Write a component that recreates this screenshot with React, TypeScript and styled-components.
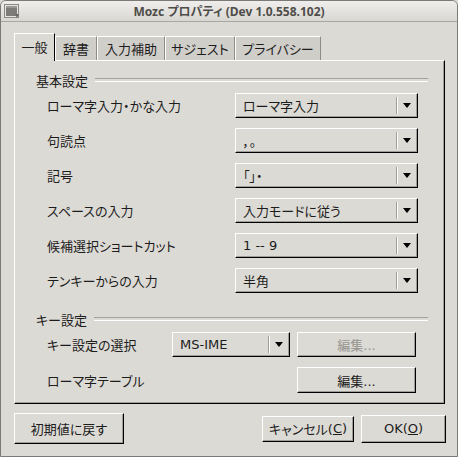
import React from "react";
import styled, { createGlobalStyle, css } from "styled-components";

const GlobalStyle = createGlobalStyle`
  html, body {
    margin: 0;
    padding: 0;
    background: #dcdad5;
  }
  body {
    font-family: "DejaVu Sans", "Noto Sans CJK JP", sans-serif;
    font-size: 13px;
    color: #1c1c1c;
    font-feature-settings: "palt";
  }
  * {
    box-sizing: border-box;
  }
`;

const raised = css`
  border: 1px solid;
  border-color: #ffffff #000000 #000000 #ffffff;
  box-shadow: inset -1px -1px 0 #a09e99;
  background: #dcdad5;
`;

const Window = styled.div`
  width: 458px;
  height: 457px;
  border: 1px solid #7b7a76;
  border-radius: 6px 6px 0 0;
  background: #dcdad5;
  overflow: hidden;
  display: flex;
  flex-direction: column;
`;

const TitleBar = styled.div`
  height: 21px;
  display: grid;
  grid-template-columns: 24px 1fr 24px;
  align-items: center;
  background: linear-gradient(#efeeec, #d9d7d2);
  border-bottom: 1px solid #a9a7a2;
`;

const TitleIcon = styled.div`
  display: flex;
  padding-left: 3px;
  padding-top: 1px;
`;

const TitleText = styled.div`
  text-align: center;
  font-family: "Noto Sans", "Noto Sans CJK JP", sans-serif;
  font-weight: bold;
  font-size: 12px;
  color: #4e4d4a;
`;

const Body = styled.div`
  padding: 11px 11px 0 13px;
  display: flex;
  flex-direction: column;
`;

const TabBar = styled.div`
  display: flex;
  align-items: flex-end;
  height: 27px;
`;

const Tab = styled.div<{ $active?: boolean; $w: number }>`
  position: relative;
  width: ${(p) => p.$w}px;
  height: ${(p) => (p.$active ? 28 : 24)}px;
  margin-bottom: ${(p) => (p.$active ? -1 : 0)}px;
  z-index: ${(p) => (p.$active ? 2 : 1)};
  display: flex;
  align-items: center;
  justify-content: center;
  padding-bottom: ${(p) => (p.$active ? 3 : 1)}px;
  border-top: 1px solid #ffffff;
  border-left: 1px solid #ffffff;
  border-right: 1px solid ${(p) => (p.$active ? "#000000" : "#8e8c87")};
  background: ${(p) => (p.$active ? "#dcdad5" : "#d0cec9")};
  font-family: "Noto Sans CJK JP", sans-serif;
  font-size: 13px;
  color: #1c1c1c;
`;

const Pane = styled.div`
  width: 431px;
  height: 344px;
  border: 1px solid;
  border-color: #ffffff #000000 #000000 #ffffff;
  box-shadow: inset -1px -1px 0 #a09e99;
  padding: 11px 16px 0 21px;
  display: flex;
  flex-direction: column;
`;

const Group = styled.div<{ $gap?: number }>`
  display: flex;
  flex-direction: column;
  width: 392px;
  margin-top: ${(p) => p.$gap ?? 0}px;
`;

const GroupTitle = styled.div`
  display: flex;
  align-items: center;
  gap: 7px;
  height: 16px;
  font-family: "Noto Sans CJK JP", sans-serif;
  font-size: 13px;
  margin-bottom: 5px;

  &::after {
    content: "";
    flex: 1;
    height: 2px;
    border-top: 1px solid #a3a19c;
    border-bottom: 1px solid #ffffff;
  }
`;

const Rows = styled.div`
  display: flex;
  flex-direction: column;
  gap: 10px;
  padding: 0 10px 0 11px;
`;

const Row = styled.div<{ $label: number }>`
  display: grid;
  grid-template-columns: ${(p) => p.$label}px 1fr;
  align-items: center;
  height: 25px;
`;

const Label = styled.div`
  font-family: "Noto Sans CJK JP", sans-serif;
  font-size: 13px;
`;

const Controls = styled.div`
  display: flex;
  gap: 7px;
  height: 100%;
`;

const ComboBox = styled.div<{ $w?: number }>`
  ${raised};
  width: ${(p) => (p.$w ? `${p.$w}px` : "100%")};
  height: 100%;
  display: flex;
  align-items: center;
  padding-left: 7px;
  font-family: "DejaVu Sans", "Noto Sans CJK JP", sans-serif;
  font-size: 13px;
`;

const ComboText = styled.span`
  flex: 1;
  white-space: nowrap;
`;

const ArrowBox = styled.div`
  width: 20px;
  height: 17px;
  display: flex;
  align-items: center;
  justify-content: center;
  border-left: 1px solid #a09e99;
  box-shadow: inset 1px 0 0 #ffffff;
  margin-right: 1px;
  padding-left: 1px;
`;

const Arrow = styled.div`
  width: 0;
  height: 0;
  border-left: 4px solid transparent;
  border-right: 4px solid transparent;
  border-top: 5px solid #000000;
`;

const Button = styled.div<{ $w: number; $h?: number; $disabled?: boolean }>`
  ${raised};
  width: ${(p) => p.$w}px;
  height: ${(p) => (p.$h ? `${p.$h}px` : "100%")};
  display: flex;
  align-items: center;
  justify-content: center;
  font-family: "DejaVu Sans", "Noto Sans CJK JP", sans-serif;
  font-size: 13px;
  color: ${(p) => (p.$disabled ? "#96948f" : "#1c1c1c")};
`;

const Spacer = styled.span<{ $w: number }>`
  width: ${(p) => p.$w}px;
`;

const Footer = styled.div`
  display: flex;
  align-items: center;
  justify-content: space-between;
  margin-top: 9px;
  height: 31px;
`;

const FooterRight = styled.div`
  display: flex;
  align-items: center;
  gap: 7px;
`;

const WindowIcon = () => (
  <svg width="16" height="15" viewBox="0 0 16 15">
    <rect x="0.5" y="0.5" width="14" height="13" fill="#e6e5e2" stroke="#8a8985" />
    <rect x="2" y="2" width="11" height="10" fill="#7d7c79" />
    <rect x="2" y="2" width="11" height="2" fill="#9a9995" />
    <path d="M11 10 L15 10 L13 14 Z" fill="#6b6a67" />
  </svg>
);

const Combo = ({ value, w }: { value: string; w?: number }) => (
  <ComboBox $w={w}>
    <ComboText>{value}</ComboText>
    <ArrowBox>
      <Arrow />
    </ArrowBox>
  </ComboBox>
);

const basicRows = [
  { label: "ローマ字入力・かな入力", value: "ローマ字入力" },
  { label: "句読点", value: "，。" },
  { label: "記号", value: "「」・" },
  { label: "スペースの入力", value: "入力モードに従う" },
  { label: "候補選択ショートカット", value: "1 -- 9" },
  { label: "テンキーからの入力", value: "半角" },
];

const tabs = [
  { name: "一般", w: 41 },
  { name: "辞書", w: 42 },
  { name: "入力補助", w: 68 },
  { name: "サジェスト", w: 70 },
  { name: "プライバシー", w: 86 },
];

export default function App() {
  return (
    <>
      <GlobalStyle />
      <Window>
        <TitleBar>
          <TitleIcon>
            <WindowIcon />
          </TitleIcon>
          <TitleText>Mozc プロパティ (Dev 1.0.558.102)</TitleText>
          <span />
        </TitleBar>
        <Body>
          <TabBar>
            {tabs.map((t, i) => (
              <Tab key={t.name} $w={t.w} $active={i === 0}>
                {t.name}
              </Tab>
            ))}
          </TabBar>
          <Pane>
            <Group>
              <GroupTitle>基本設定</GroupTitle>
              <Rows>
                {basicRows.map((r) => (
                  <Row key={r.label} $label={188}>
                    <Label>{r.label}</Label>
                    <Combo value={r.value} />
                  </Row>
                ))}
              </Rows>
            </Group>
            <Group $gap={18}>
              <GroupTitle>キー設定</GroupTitle>
              <Rows>
                <Row $label={125}>
                  <Label>キー設定の選択</Label>
                  <Controls>
                    <Combo value="MS-IME" w={118} />
                    <Button $w={119} $disabled>
                      編集...
                    </Button>
                  </Controls>
                </Row>
                <Row $label={125}>
                  <Label>ローマ字テーブル</Label>
                  <Controls>
                    <Spacer $w={118} />
                    <Button $w={119} $h={26}>
                      編集...
                    </Button>
                  </Controls>
                </Row>
              </Rows>
            </Group>
          </Pane>
          <Footer>
            <Button $w={110} $h={31}>
              初期値に戻す
            </Button>
            <FooterRight>
              <Button $w={92} $h={26}>
                キャンセル(<u>C</u>)
              </Button>
              <Button $w={85} $h={28}>
                OK(<u>O</u>)
              </Button>
            </FooterRight>
          </Footer>
        </Body>
      </Window>
    </>
  );
}
